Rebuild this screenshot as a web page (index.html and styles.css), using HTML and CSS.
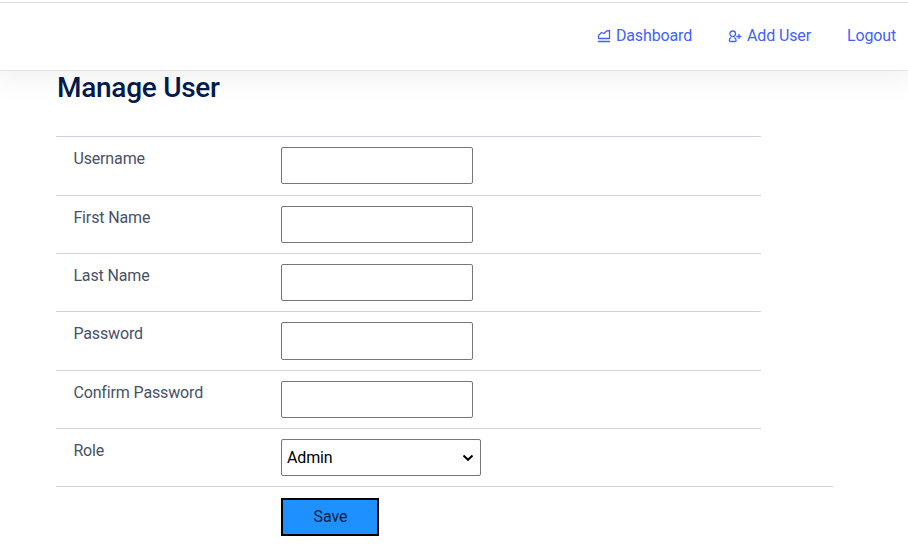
FILE: index.html
```html
<!DOCTYPE html>
<html lang="en">
<head>
<meta charset="utf-8">
<title>Manage User</title>
<link rel="stylesheet" href="styles.css">
</head>
<body>
<header class="header">
  <nav class="nav">
    <a class="link" href="#"><svg class="icon" width="14" height="14" viewBox="0 0 14 14"><path d="M1.5 9.5V6.5L4.5 3.5L7 4.5L10 1.8L12.5 1.5V9.5ZM.8 12.5H13.2"/></svg>Dashboard</a>
    <a class="link" href="#"><svg class="icon" width="14" height="14" viewBox="0 0 14 14"><circle cx="4.7" cy="4.8" r="2.8"/><path d="M3.2 8.6Q1.3 9.3 1.3 11.2Q1.3 12.5 2.5 12.5H6.9Q8.1 12.5 8.1 11.2Q8.1 9.3 6.2 8.6M8.3 7.5H13.5M11 5V10"/></svg>Add User</a>
    <a class="link" href="#">Logout</a>
  </nav>
</header>
<main class="main">
  <h1 class="title">Manage User</h1>
  <form class="form">
    <div class="row"><label for="username">Username</label><input class="field" id="username" type="text"></div>
    <div class="row"><label for="first">First Name</label><input class="field" id="first" type="text"></div>
    <div class="row"><label for="last">Last Name</label><input class="field" id="last" type="text"></div>
    <div class="row"><label for="password">Password</label><input class="field" id="password" type="password"></div>
    <div class="row"><label for="confirm">Confirm Password</label><input class="field" id="confirm" type="password"></div>
    <div class="row"><label for="role">Role</label><div class="select-wrap"><select class="field select" id="role"><option>Admin</option></select><svg class="chevron" width="12" height="8" viewBox="0 0 12 8"><path d="M1.5 1.5L6 5.8L10.5 1.5"/></svg></div></div>
    <div class="row actions"><button class="save" type="button">Save</button></div>
  </form>
</main>
</body>
</html>
```
FILE: styles.css
```css
* { box-sizing: border-box; }
body {
  margin: 0;
  height: 552px;
  overflow: hidden;
  background: #fff;
  color: #485166;
  font: 400 16px/24px Roboto, sans-serif;
  letter-spacing: -.14px;
}
.header {
  height: 69px;
  margin-top: 2px;
  border-top: 1px solid #dcdcde;
  border-bottom: 1px solid #e2e2e4;
  background: #fff;
  box-shadow: 0 0 30px 8px rgba(0, 0, 0, .06);
  clip-path: inset(0 0 -50px 0);
}
.nav {
  display: flex;
  justify-content: flex-end;
  gap: 36px;
  padding: 21px 12px 0 0;
}
.link {
  display: flex;
  color: #4262fa;
  text-decoration: none;
}
.icon {
  margin: 5px 5px 0 0;
  fill: none;
  stroke: currentColor;
  stroke-width: 1.3;
  stroke-linejoin: round;
}
.main { padding-left: 56px; }
.title {
  height: 65.3px;
  margin: 0;
  padding-left: 1px;
  color: #031b4e;
  font-size: 28px;
  font-weight: 500;
  line-height: 34px;
  letter-spacing: -.28px;
}
.row {
  display: grid;
  grid-template-columns: 207.6px 200px;
  align-items: start;
  width: 705px;
  height: 58.36px;
  padding: 9.95px 0 0 17.4px;
  border-top: 1px solid #cfd3e0;
}
.field {
  width: 192px;
  height: 37.2px;
  margin: 0;
  padding: 1px 2px;
  border: 1px solid #767676;
  border-radius: 2px;
  background: #fff;
  color: #000;
  font: inherit;
  letter-spacing: -.14px;
}
.select-wrap {
  display: flex;
  position: relative;
}
.select {
  width: 200px;
  padding: 0 20px 0 5px;
  appearance: none;
}
.chevron {
  position: absolute;
  top: 15px;
  right: 7px;
  fill: none;
  stroke: #000;
  stroke-width: 2;
  pointer-events: none;
}
.actions { width: 777px; }
.save {
  grid-column: 2;
  width: 98px;
  height: 38px;
  margin-top: 1px;
  padding: 0 0 0 1px;
  border: 2px solid #000;
  background: #1e90ff;
  color: #0b1c38;
  font: inherit;
  letter-spacing: -.05px;
}
```
